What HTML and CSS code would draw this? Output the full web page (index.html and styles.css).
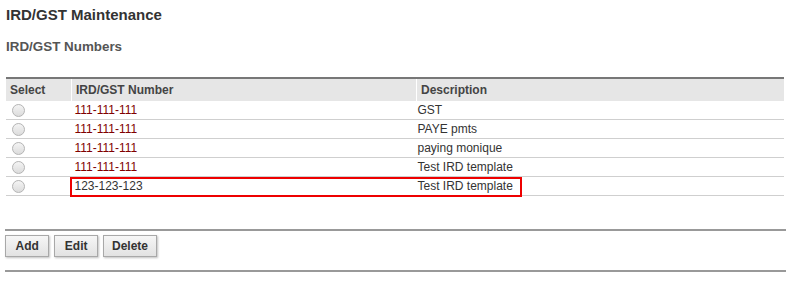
FILE: index.html
```html
<!DOCTYPE html>
<html lang="en">
<head>
    <meta charset="UTF-8">
    <title>IRD/GST Maintenance</title>
    <link rel="stylesheet" href="styles.css">
</head>
<body>
    <h1 class="page-title">IRD/GST Maintenance</h1>
    <h2 class="section-title">IRD/GST Numbers</h2>

    <div class="grid-wrap">
        <table class="grid">
            <thead>
                <tr>
                    <th class="col-select">Select</th>
                    <th class="col-number">IRD/GST Number</th>
                    <th>Description</th>
                </tr>
            </thead>
            <tbody>
                <tr><td><span class="radio"></span></td><td class="num">111-111-111</td><td class="desc">GST</td></tr>
                <tr><td><span class="radio"></span></td><td class="num">111-111-111</td><td class="desc">PAYE pmts</td></tr>
                <tr><td><span class="radio"></span></td><td class="num">111-111-111</td><td class="desc">paying monique</td></tr>
                <tr><td><span class="radio"></span></td><td class="num">111-111-111</td><td class="desc">Test IRD template</td></tr>
                <tr><td><span class="radio"></span></td><td class="num plain">123-123-123</td><td class="desc">Test IRD template</td></tr>
            </tbody>
        </table>
        <!-- red outline drawn over the last row -->
        <div class="highlight"></div>
    </div>

    <div class="actions">
        <button class="btn btn-short">Add</button>
        <button class="btn btn-short">Edit</button>
        <button class="btn">Delete</button>
    </div>
</body>
</html>
```

FILE: styles.css
```css
body{margin: 0; padding: 0 4px 0 5px; font-family: "Liberation Sans", Arial, sans-serif; color: #333; background: #fff;}

.page-title{font-size: 15px; font-weight: bold; color: #333; margin: 0; padding: 6px 0 0 1px; line-height: 17px;}
.section-title{font-size: 13.4px; font-weight: bold; color: #555; margin: 0; padding: 16px 0 0 1px; line-height: 16px;}

.grid-wrap{position: relative; margin: 22px 0 0 1px; width: 778px;}
.grid{
    width: 778px;
    border-collapse: collapse;
    border-top: 2px solid #777;
    font-size: 12px;
}
.grid th{
    background-color: #e6e6e6;
    text-align: left;
    font-weight: bold;
    color: #444;
    height: 22px;
    padding: 0 0 0 4px;
    border-left: 1px solid #fff;
}
.grid th:first-child{border-left: none;}
.col-select{width: 61px;}
.col-number{width: 340px;}

.grid td{
    height: 18px;
    padding: 0 0 0 4px;
    border-bottom: 1px solid #cfcfcf;
    color: #333;
}
.grid td.num{color: #800000; padding-left: 3px;}
.grid td.plain{color: #333;}
.grid td.desc{padding-left: 1px;}

.radio{
    display: block;
    width: 11px;
    height: 11px;
    margin-left: 2px;
    border: 1px solid #b5b5b5;
    border-radius: 50%;
    background: linear-gradient(#f4f4f4, #dcdcdc);
}

.highlight{
    position: absolute;
    left: 64px;
    top: 100px;
    width: 448px;
    height: 16px;
    border: 2px solid #e00;
}

.actions{
    margin-top: 33px;
    border-top: 2px solid #999;
    border-bottom: 2px solid #999;
    padding: 4px 0 13px 0;
    display: flex;
    gap: 5px;
}
.btn{
    font-family: "Liberation Sans", Arial, sans-serif;
    font-size: 12px;
    font-weight: bold;
    color: #333;
    height: 22px;
    padding: 0 8px;
    background: linear-gradient(#f6f6f6, #e2e2e2);
    border: 1px solid #a8a8a8;
    box-shadow: 1px 1px 2px rgba(0,0,0,0.25);
    border-radius: 0;
}
.btn-short{padding: 0 9.5px;}
```
